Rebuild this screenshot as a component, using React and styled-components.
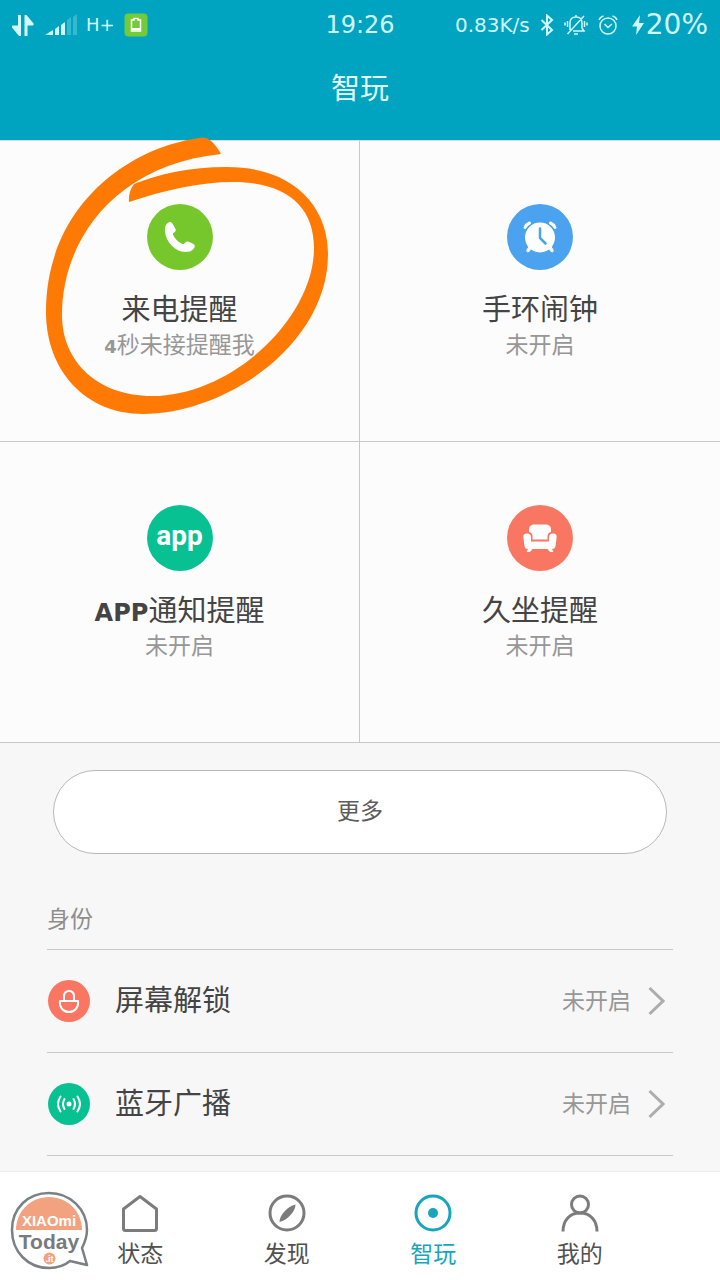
import React from 'react'
import styled, { createGlobalStyle } from 'styled-components'

const GlobalStyle = createGlobalStyle`
    * {
        box-sizing: border-box;
    }

    body {
        margin: 0;
        background: #f7f7f7;
        color: #444;
        font-family: 'DejaVu Sans', 'Noto Sans CJK SC', sans-serif;
    }

    button {
        margin: 0;
        font: inherit;
        color: inherit;
        cursor: pointer;
    }

    svg {
        display: block;
        flex-shrink: 0;
    }
`

const Page = styled.div`
    display: flex;
    flex-direction: column;
    min-height: 100vh;
`

const Header = styled.header`
    background: #00a4c0;
    color: #e6fbff;
`

const StatusBar = styled.div`
    display: grid;
    grid-template-columns: 1fr auto 1fr;
    align-items: center;
    height: 50px;
    padding: 0 12px;
    color: #d2f8ff;
`

const StatusGroup = styled.div`
    display: flex;
    align-items: center;
    gap: ${props => props.$gap};
    justify-content: ${props => props.$end ? 'flex-end' : 'flex-start'};
`

const StatusText = styled.span`
    font-size: ${props => props.$size};
    line-height: 28px;
    white-space: nowrap;
`

const Charge = styled.span`
    display: flex;
    align-items: center;
    gap: 2px;
    margin-left: 4px;
`

const Title = styled.h1`
    margin: 0;
    padding: 19px 0 31px;
    font-size: 29px;
    font-weight: 400;
    line-height: 40px;
    text-align: center;
`

const Main = styled.main`
    flex: 1;
    padding-bottom: 14px;
`

const Grid = styled.section`
    display: grid;
    grid-template-columns: 1fr 1fr;
    border-top: 1px solid #d4dcde;
    background: #fcfcfc;
`

const Card = styled.button`
    position: relative;
    display: flex;
    flex-direction: column;
    align-items: center;
    padding: 63px 0 80px;
    border: none;
    border-bottom: 1px solid #c8c8c8;
    background: none;

    &:nth-child(odd) {
        border-right: 1px solid #c8c8c8;
    }
`

const Badge = styled.span`
    display: flex;
    align-items: center;
    justify-content: center;
    flex-shrink: 0;
    width: ${props => props.$size};
    height: ${props => props.$size};
    border-radius: 50%;
    background: ${props => props.$color};
    color: #fff;
`

const AppWord = styled.span`
    padding-bottom: 4px;
    font-family: Roboto, sans-serif;
    font-size: 28px;
    font-weight: 700;
    line-height: 36px;
`

const CardTitle = styled.span`
    height: 36px;
    margin-top: 22px;
    font-size: 29px;
    line-height: 36px;
    color: #444;
`

const CardText = styled.span`
    height: 32px;
    margin-top: 1px;
    font-size: 23px;
    line-height: 32px;
    color: #979797;
`

const Latin = styled.span`
    font-size: ${props => props.$size};
    font-weight: 700;
    line-height: 1;
`

const Marker = styled.svg`
    position: absolute;
    top: -11px;
    left: 40px;
    z-index: 1;
    pointer-events: none;
`

const MoreWrap = styled.div`
    padding: 27px 53px 0;
`

const MoreButton = styled.button`
    display: block;
    width: 100%;
    height: 84px;
    padding: 0 0 2px;
    border: 1px solid #b8b8b8;
    border-radius: 42px;
    background: #fff;
    color: #5c5c5c;
    font-size: 23px;
    line-height: 32px;
`

const Section = styled.section`
    padding: 49px 47px 0;
`

const SectionTitle = styled.h2`
    margin: 0;
    padding-bottom: 14px;
    border-bottom: 1px solid #c8c8c8;
    color: #8e8e8e;
    font-size: 23px;
    font-weight: 400;
    line-height: 32px;
`

const Row = styled.button`
    display: flex;
    align-items: center;
    width: 100%;
    height: 103px;
    padding: 0 8px 0 1px;
    border: none;
    border-bottom: 1px solid #c8c8c8;
    background: none;
    text-align: left;
`

const RowTitle = styled.span`
    flex: 1;
    margin-left: 25px;
    font-size: 29px;
    line-height: 36px;
`

const RowState = styled.span`
    margin-right: 17px;
    color: #979797;
    font-size: 23px;
    line-height: 32px;
`

const Nav = styled.nav`
    position: relative;
    display: grid;
    grid-template-columns: repeat(4, 1fr);
    padding: 21px 67px 10px;
    border-top: 1px solid #ededed;
    background: #fff;
`

const Tab = styled.a`
    display: flex;
    flex-direction: column;
    align-items: center;
    gap: 5px;
    color: ${props => props.$active ? '#17a5bb' : '#505050'};
    font-size: 23px;
    line-height: 32px;
    text-decoration: none;

    svg {
        color: ${props => props.$active ? '#17a5bb' : '#7c7c7c'};
    }
`

const Watermark = styled.svg`
    position: absolute;
    left: 10px;
    bottom: 10px;
`

const DataArrows = () => (
  <svg width="24" height="24" viewBox="0 0 24 24" fill="currentColor">
    <path d="M6 2h3v21H7L-.5 14l1-1.500H6zM12.500 2h2l7.500 9-1 1.500h-5.500V23h-3z" />
  </svg>
)

const Signal = () => (
  <svg width="32" height="22" viewBox="0 0 32 22" fill="currentColor">
    <path d="M0 21l8-5v5zM10 15l4-3v9h-4zM16 11l4-3v13h-4z" />
    <path opacity=".25" d="M22 6l4-3v18h-4zM28 3l4-3v21h-4z" />
  </svg>
)

const BatterySaver = () => (
  <svg width="24" height="24" viewBox="0 0 24 24">
    <rect x=".5" y=".5" width="23" height="23" rx="4" fill="#74cb3a" />
    <path d="M10 5.500h4v1.500h2.500v11h-9V7H10z" fill="none" stroke="#fff" strokeWidth="1.500" />
    <path d="M8 16h8" stroke="#fff" strokeWidth="2" />
  </svg>
)

const Bluetooth = () => (
  <svg width="14" height="22" viewBox="0 0 14 22" fill="none" stroke="currentColor" strokeWidth="2">
    <path d="M1.500 6l10.500 10-5 4.500v-19L12 6 1.500 16" />
  </svg>
)

const Muted = () => (
  <svg width="24" height="22" viewBox="0 0 24 22" fill="none" stroke="currentColor" strokeWidth="1.500">
    <path d="M6 16V9c0-4 2-6 6-6s6 2 6 6v5l2 3H9M10 20h4M12 3V1M3.500 20L20 2M3.500 7v6M1 8.500v3M20.500 7v6M23 8.500v3" />
  </svg>
)

const StatusAlarm = () => (
  <svg width="20" height="20" viewBox="0 0 20 20" fill="none" stroke="currentColor" strokeWidth="1.500">
    <circle cx="10" cy="11" r="8" />
    <path d="M6.500 9l3.500 3.500L14 9M1 5q1-3 4.500-4M19 5q-1-3-4.500-4" />
  </svg>
)

const Bolt = () => (
  <svg width="12" height="22" viewBox="0 0 12 22" fill="currentColor">
    <path d="M8 1L0 12.500h5L4 21l8-12H7z" />
  </svg>
)

const Phone = () => (
  <svg width="66" height="66" viewBox="0 0 66 66" fill="currentColor">
    <path d="M21.500 18.500c2-1 3.500 0 4.500 2l2.500 4.500c.8 1.500 0 2.800-1.500 3.600-1 .6-1.200 1.400-.8 2.400 1.800 4 5 7 8.800 8.800 1 .4 2 .3 2.700-.6 1.300-1.700 2.300-2.200 4-1.400l4.300 1.900c2 .9 2.300 2.400 1.200 4.200-1.800 3-5 4.200-9.200 4.100-9.600-.4-19-9.600-20-20.500-.3-4.200.5-7.500 3.500-9z" />
  </svg>
)

const AlarmClock = () => (
  <svg width="66" height="66" viewBox="0 0 66 66" fill="none" strokeLinecap="round">
    <circle cx="33" cy="33.500" r="15" fill="#fff" />
    <path d="M18 23.500c1-2.200 2.500-3.700 4.500-4.500M48 23.500c-1-2.200-2.500-3.700-4.500-4.500" stroke="#fff" strokeWidth="3" />
    <path d="M23.500 43l-2.500 3.500M42.500 43l2.500 3.500" stroke="#fff" strokeWidth="3.500" />
    <path d="M33 24.500v9.500l5.500 5.500" stroke="#4ba3ef" strokeWidth="2.500" />
  </svg>
)

const Sofa = () => (
  <svg width="66" height="66" viewBox="0 0 66 66" fill="currentColor">
    <path d="M22 27v-2c0-4 2-5.500 6-5.500h10c4 0 6 1.500 6 5.500v2c-2.500.5-3.500 2-3.500 4v3.500h-15V31c0-2-1-3.500-3.500-4z" />
    <path d="M20 28.500c2.500 0 4 1.200 4 3.500v4.500h18V32c0-2.300 1.500-3.500 4-3.500 2.700 0 4 1.500 3.600 4L48.500 41c-.3 2-1.300 3-3.500 3l1.500 3h-3.500L40.500 44h-15L23 47h-3.500L21 44c-2.200 0-3.200-1-3.500-3l-1.100-8.500c-.4-2.500.9-4 3.600-4z" />
  </svg>
)

const Unlock = () => (
  <svg width="24" height="24" viewBox="0 0 24 24" fill="none" stroke="currentColor" strokeWidth="2" strokeLinecap="round" strokeLinejoin="round">
    <path d="M7 12V7.500c0-3.500 2-5.500 5-5.500s5 2 5 5.500V12M3 12h18c1 6-3 11-9 11s-10-5-9-11z" />
  </svg>
)

const Broadcast = () => (
  <svg width="26" height="20" viewBox="0 0 26 20" fill="none" stroke="currentColor" strokeWidth="2" strokeLinecap="round">
    <circle cx="13" cy="10" r="2.500" fill="currentColor" stroke="none" />
    <path d="M8.500 5q-3 5 0 10M17.500 5q3 5 0 10M4.500 2.500q-5 7.500 0 15M21.500 2.500q5 7.500 0 15" />
  </svg>
)

const Chevron = () => (
  <svg width="17" height="30" viewBox="0 0 17 30" fill="none" stroke="#adadad" strokeWidth="3">
    <path d="M1.500 2L15 15 1.500 28" />
  </svg>
)

const Home = () => (
  <svg width="40" height="40" viewBox="0 0 40 40" fill="none" stroke="currentColor" strokeWidth="3" strokeLinejoin="round">
    <path d="M20 3.500L36.500 16v19.500q0 2-2 2h-29q-2 0-2-2V16z" />
  </svg>
)

const Compass = () => (
  <svg width="40" height="40" viewBox="0 0 40 40" fill="none" stroke="currentColor" strokeWidth="3">
    <circle cx="20" cy="20" r="17" />
    <path d="M28.500 11.500c0 4-2 7-5 10.500s-7 6-11 7c0-4 2-7 5-10.500s7-6 11-7z" fill="currentColor" stroke="none" />
  </svg>
)

const Target = () => (
  <svg width="40" height="40" viewBox="0 0 40 40" fill="none" stroke="currentColor" strokeWidth="3">
    <circle cx="20" cy="20" r="17" />
    <circle cx="20" cy="20" r="5" fill="currentColor" stroke="none" />
  </svg>
)

const Person = () => (
  <svg width="40" height="40" viewBox="0 0 40 40" fill="none" stroke="currentColor" strokeWidth="3">
    <circle cx="20" cy="11.500" r="8.500" />
    <path d="M3 38.500C3 27 10 20 20 20s17 7 17 18.500" />
  </svg>
)

const OrangeCircle = () => (
  <Marker width="290" height="290" viewBox="40 130 290 290" fill="#ff7a05" aria-hidden="true">
    <path d="M221 154C216 145 210 138 203 137.500C130 146 46 205 46 312C46 370 85 414 143 414C225 414 328 345 328 254C328 205 292 167 227 167C190 167 158 174 134 184C130 189 128.500 195 129 202C165 190 200 182 233 182C286 182 314 206 314 248C314 318 232 396 152 396C98 396 62 362 62 315C62 240 115 165 221 154Z" />
  </Marker>
)

const Logo = () => (
  <Watermark width="80" height="80" viewBox="10 1190 80 80" role="img" aria-label="Xiaomi Today">
    <path d="M49 1193c21 0 38 16 38 37 0 7-2 12-5 18l5 17-17-4c-6 5-13 7-21 7-21 0-37-16-37-38s16-37 37-37z" fill="#fff" stroke="#7b8084" strokeWidth="2.500" strokeLinejoin="round" />
    <path d="M16 1230c0-19 15-33 33-33s33 14 33 33z" fill="#f2a27f" />
    <text x="49" y="1226" fill="#fff" fontFamily="'Liberation Sans', sans-serif" fontSize="15" fontWeight="700" textAnchor="middle">XIAOmi</text>
    <text x="49" y="1249" fill="#777b80" fontFamily="'Liberation Sans', sans-serif" fontSize="21" fontWeight="700" textAnchor="middle">Today</text>
    <circle cx="49.500" cy="1258.500" r="6" fill="#f2a27f" />
    <text x="49.500" y="1262" fill="#fff" fontFamily="'Liberation Sans', sans-serif" fontSize="9" fontWeight="700" textAnchor="middle">.it</text>
  </Watermark>
)

const cards = [
  { title: '来电提醒', text: <><Latin $size="18px">4</Latin>秒未接提醒我</>, color: '#76c72b', icon: <Phone />, marked: true },
  { title: '手环闹钟', text: '未开启', color: '#4ba3ef', icon: <AlarmClock /> },
  { title: <><Latin $size="24px">APP</Latin>通知提醒</>, text: '未开启', color: '#08c193', icon: <AppWord>app</AppWord> },
  { title: '久坐提醒', text: '未开启', color: '#f97662', icon: <Sofa /> },
]

const rows = [
  { title: '屏幕解锁', color: '#f97662', icon: <Unlock /> },
  { title: '蓝牙广播', color: '#08c193', icon: <Broadcast /> },
]

const tabs = [
  { label: '状态', icon: <Home /> },
  { label: '发现', icon: <Compass /> },
  { label: '智玩', icon: <Target />, active: true },
  { label: '我的', icon: <Person /> },
]

const App = () => {
  return (
    <Page>
        <GlobalStyle />
        <Header>
            <StatusBar>
                <StatusGroup $gap="9px">
                    <DataArrows />
                    <Signal />
                    <StatusText $size="18px">H+</StatusText>
                    <BatterySaver />
                </StatusGroup>
                <StatusText $size="24px">19:26</StatusText>
                <StatusGroup $gap="10px" $end>
                    <StatusText $size="20px">0.83K/s</StatusText>
                    <Bluetooth />
                    <Muted />
                    <StatusAlarm />
                    <Charge>
                        <Bolt />
                        <StatusText $size="28px">20%</StatusText>
                    </Charge>
                </StatusGroup>
            </StatusBar>
            <Title>智玩</Title>
        </Header>
        <Main>
            <Grid>
                {cards.map((card, i) => (
                    <Card key={i} type="button">
                        <Badge $size="66px" $color={card.color}>{card.icon}</Badge>
                        <CardTitle>{card.title}</CardTitle>
                        <CardText>{card.text}</CardText>
                        {card.marked && <OrangeCircle />}
                    </Card>
                ))}
            </Grid>
            <MoreWrap>
                <MoreButton type="button">更多</MoreButton>
            </MoreWrap>
            <Section>
                <SectionTitle>身份</SectionTitle>
                {rows.map(row => (
                    <Row key={row.title} type="button">
                        <Badge $size="42px" $color={row.color}>{row.icon}</Badge>
                        <RowTitle>{row.title}</RowTitle>
                        <RowState>未开启</RowState>
                        <Chevron />
                    </Row>
                ))}
            </Section>
        </Main>
        <Nav>
            {tabs.map(tab => (
                <Tab key={tab.label} href="#" $active={tab.active}>
                    {tab.icon}
                    {tab.label}
                </Tab>
            ))}
            <Logo />
        </Nav>
    </Page>
  )
}

export default App
